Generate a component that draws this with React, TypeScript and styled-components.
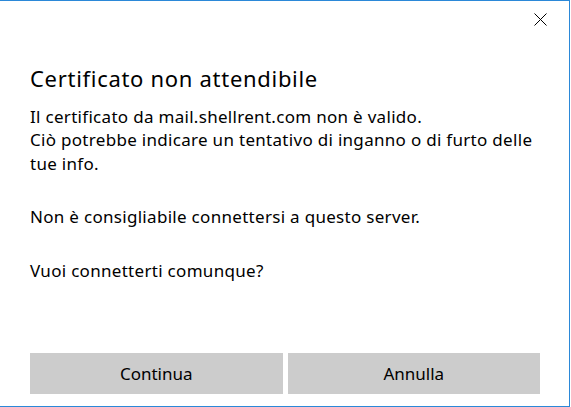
import styled, { createGlobalStyle } from 'styled-components'

const GlobalStyle = createGlobalStyle`
  html, body {
    margin: 0;
    padding: 0;
    background: #ffffff;
  }
  * {
    box-sizing: border-box;
  }
`

const ACCENT = '#2b88d8'

function CloseIcon() {
  return (
    <svg width="13" height="13" viewBox="0 0 13 13" aria-hidden="true">
      <path d="M0.5 0.5 L12.5 12.5 M12.5 0.5 L0.5 12.5" stroke="#000" strokeWidth="1" fill="none" />
    </svg>
  )
}

export default function App() {
  return (
    <>
      <GlobalStyle />
      <Dialog>
        <TitleBar>
          <CloseButton aria-label="Chiudi">
            <CloseIcon />
          </CloseButton>
        </TitleBar>
        <Content>
          <Title>Certificato non attendibile</Title>
          <Paragraph>
            Il certificato da mail.shellrent.com non è valido.
            <br />
            Ciò potrebbe indicare un tentativo di inganno o di furto delle tue info.
          </Paragraph>
          <Paragraph $spaced>Non è consigliabile connettersi a questo server.</Paragraph>
          <Paragraph $spaced>Vuoi connetterti comunque?</Paragraph>
        </Content>
        <ButtonRow>
          <DialogButton>Continua</DialogButton>
          <DialogButton>Annulla</DialogButton>
        </ButtonRow>
      </Dialog>
    </>
  )
}

const Dialog = styled.div`
  width: 570px;
  height: 407px;
  display: flex;
  flex-direction: column;
  background: #ffffff;
  border-top: 1px solid ${ACCENT};
  border-right: 1px solid ${ACCENT};
  border-bottom: 1px solid ${ACCENT};
  font-family: 'Segoe UI', 'Noto Sans', sans-serif;
  color: #000000;
`

const TitleBar = styled.div`
  display: flex;
  justify-content: flex-end;
  height: 61.5px;
  padding: 12px 22px 0 0;
`

const CloseButton = styled.button`
  display: flex;
  align-items: flex-start;
  justify-content: center;
  width: 13px;
  height: 13px;
  padding: 0;
  border: none;
  background: transparent;
  cursor: pointer;
`

const Content = styled.div`
  flex: 1;
  padding: 0 30px;
`

const Title = styled.h1`
  margin: 0;
  font-size: 22px;
  font-weight: 400;
  line-height: 30px;
  letter-spacing: 0.7px;
`

const Paragraph = styled.p<{ $spaced?: boolean }>`
  margin: ${p => (p.$spaced ? '30px' : '12px')} 0 0;
  font-size: 17px;
  line-height: 23.5px;
  letter-spacing: 0.3px;
  max-width: 510px;
`

const ButtonRow = styled.div`
  display: flex;
  gap: 5px;
  padding: 0 29px 12px 30px;
`

const DialogButton = styled.button`
  flex: 1;
  height: 41px;
  border: none;
  background: #cccccc;
  font-family: inherit;
  font-size: 17px;
  color: #000000;
  cursor: pointer;
`
